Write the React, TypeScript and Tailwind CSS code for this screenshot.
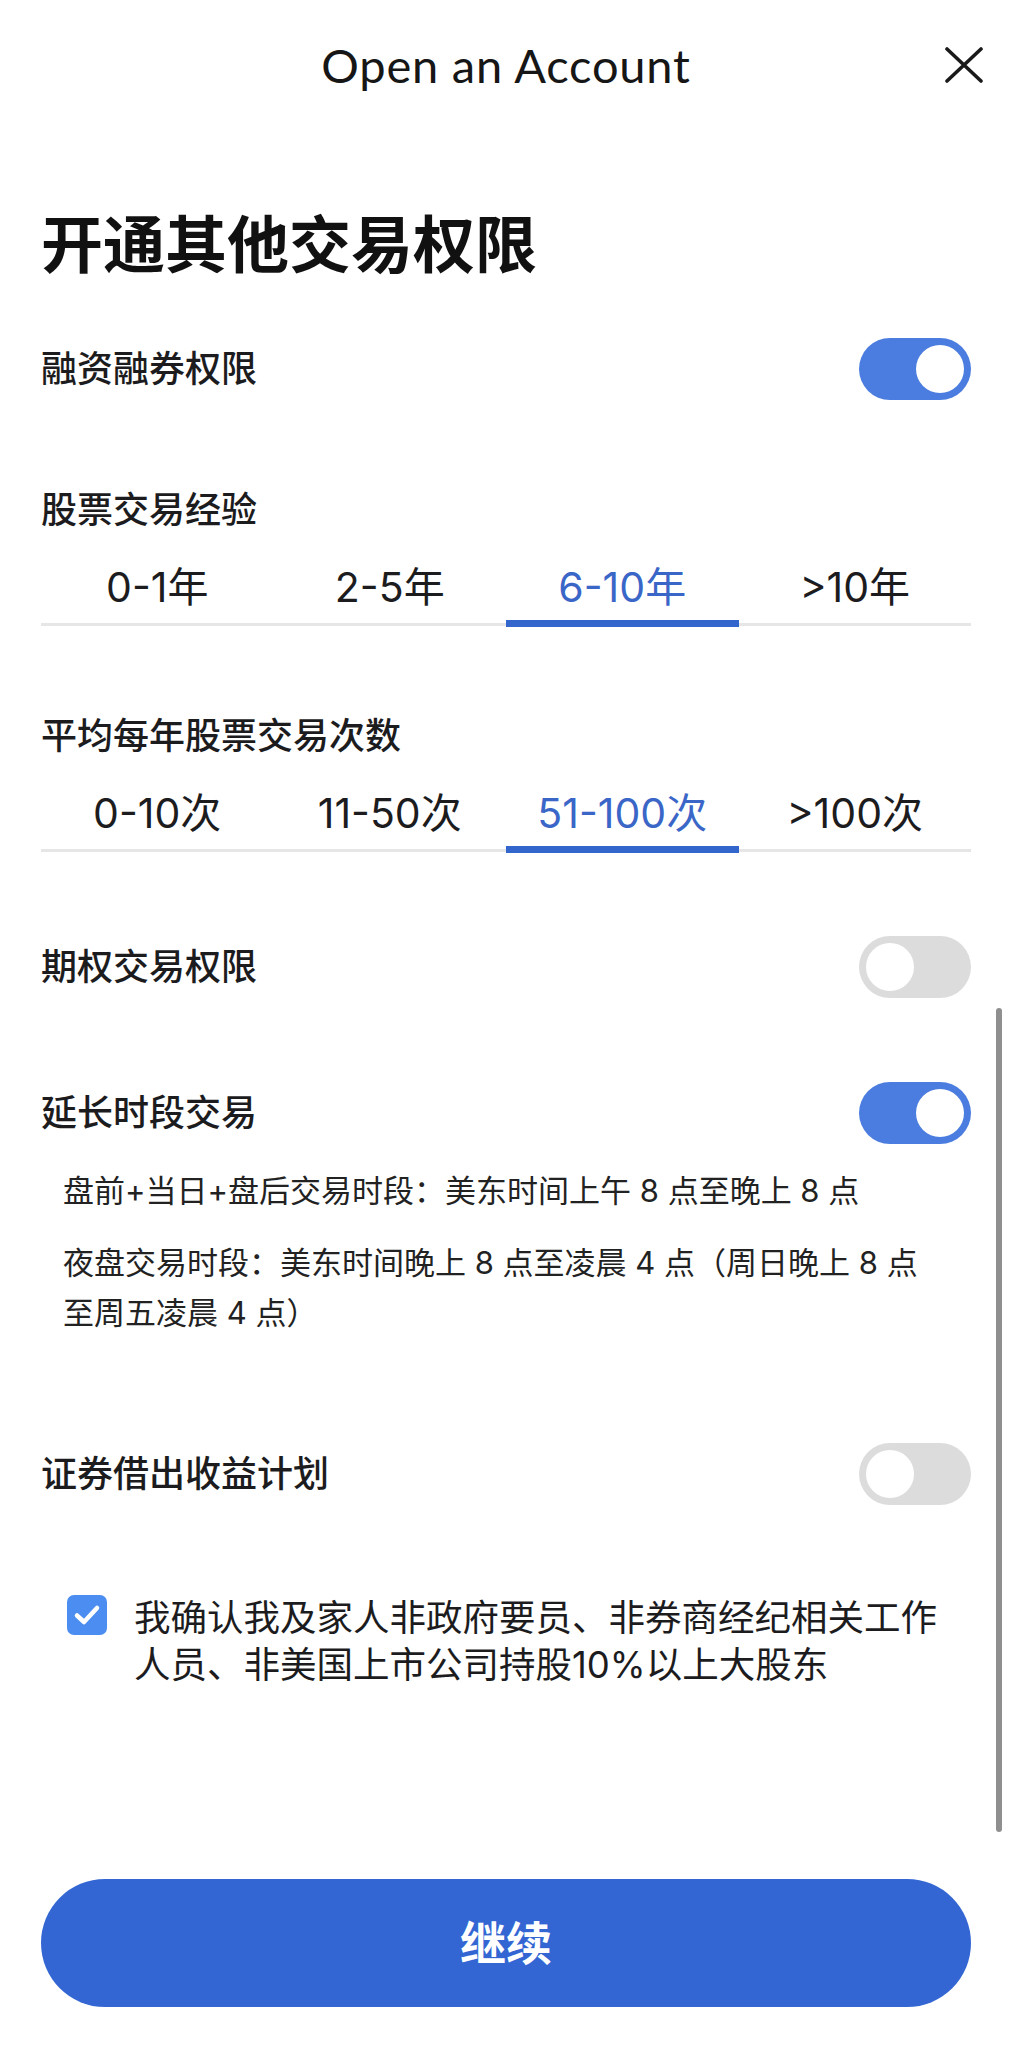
import React, { useState } from 'react';

function Toggle({ on, onClick }: { on: boolean; onClick: () => void }) {
  return (
    <button
      onClick={onClick}
      className={`flex h-[62px] w-[112px] shrink-0 items-center rounded-full p-[7px] ${
        on ? 'justify-end bg-[#4a7ddf]' : 'justify-start bg-[#dcdcdc]'
      }`}
    >
      <span className="block h-[48px] w-[48px] rounded-full bg-white" />
    </button>
  );
}

function ToggleRow({ label, on, onClick, className }: { label: string; on: boolean; onClick: () => void; className: string }) {
  return (
    <div className={`flex items-center justify-between ${className}`}>
      <span className="text-[36px] font-medium leading-[44px] text-[#1c1c1e]">{label}</span>
      <Toggle on={on} onClick={onClick} />
    </div>
  );
}

function Tabs({ items, active, onChange }: { items: string[]; active: number; onChange: (i: number) => void }) {
  return (
    <div className="mt-[31px] flex border-b-[3px] border-[#e6e6e6]">
      {items.map((item, i) => (
        <button
          key={item}
          onClick={() => onChange(i)}
          className={`-mb-[4px] flex-1 border-b-[7px] pb-[9px] text-center text-[41px] leading-[48px] ${
            i === active ? 'border-[#3366cc] text-[#3a66c8]' : 'border-transparent text-[#1c1c1e]'
          }`}
        >
          {item}
        </button>
      ))}
    </div>
  );
}

export default function App() {
  const [margin, setMargin] = useState(true);
  const [options, setOptions] = useState(false);
  const [extended, setExtended] = useState(true);
  const [lending, setLending] = useState(false);
  const [experience, setExperience] = useState(2);
  const [frequency, setFrequency] = useState(2);
  const [confirmed, setConfirmed] = useState(true);

  return (
    <div className="relative flex min-h-[2048px] flex-col bg-white pl-[41px] pr-[38px] font-['Inter','Noto_Sans_CJK_SC',sans-serif] text-[#1c1c1e]">
      {/* Header */}
      <div className="grid h-[130px] grid-cols-[1fr_auto_1fr] items-center">
        <div />
        <h1 className="font-['Lato','Noto_Sans_CJK_SC',sans-serif] text-[47px] font-normal leading-[56px] tracking-[0.8px] text-[#161616]">
          Open an Account
        </h1>
        <button className="-mr-[12px] justify-self-end">
          <svg width="38" height="36" viewBox="0 0 38 36" fill="none">
            <path d="M2 2L36 34M36 2L2 34" stroke="#1a1a1a" strokeWidth="3.6" strokeLinecap="round" />
          </svg>
        </button>
      </div>

      <h2 className="mt-[80px] text-[62px] font-bold leading-[72px] text-[#111111]">开通其他交易权限</h2>

      <ToggleRow label="融资融券权限" on={margin} onClick={() => setMargin(!margin)} className="mt-[56px]" />

      <div className="mt-[88px] text-[36px] font-medium leading-[44px]">股票交易经验</div>
      <Tabs items={['0-1年', '2-5年', '6-10年', '>10年']} active={experience} onChange={setExperience} />

      <div className="mt-[88px] text-[36px] font-medium leading-[44px]">平均每年股票交易次数</div>
      <Tabs items={['0-10次', '11-50次', '51-100次', '>100次']} active={frequency} onChange={setFrequency} />

      <ToggleRow label="期权交易权限" on={options} onClick={() => setOptions(!options)} className="mt-[84px]" />

      <ToggleRow label="延长时段交易" on={extended} onClick={() => setExtended(!extended)} className="mt-[84px]" />

      <div className="max-w-[895px] pl-[22px] text-[31px] leading-[50px] text-[#222222]">
        <p className="mt-[22px]">盘前+当日+盘后交易时段：美东时间上午 8 点至晚上 8 点</p>
        <p className="mt-[22px]">夜盘交易时段：美东时间晚上 8 点至凌晨 4 点（周日晚上 8 点至周五凌晨 4 点）</p>
      </div>

      <ToggleRow label="证券借出收益计划" on={lending} onClick={() => setLending(!lending)} className="mt-[105px]" />

      <div className="mt-[90px] flex items-start gap-[27px] pl-[26px]">
        <button
          onClick={() => setConfirmed(!confirmed)}
          className={`flex h-[40px] w-[40px] shrink-0 items-center justify-center rounded-[7px] ${
            confirmed ? 'bg-[#4b8df0]' : 'border-2 border-[#c4c4c4] bg-white'
          }`}
        >
          {confirmed && (
            <svg width="40" height="40" viewBox="0 0 40 40" fill="none">
              <path d="M10 20.5L17 27L30 13" stroke="white" strokeWidth="4.5" strokeLinecap="round" strokeLinejoin="round" />
            </svg>
          )}
        </button>
        <p className="max-w-[820px] text-[36.5px] leading-[47px] text-[#1c1c1e]">
          我确认我及家人非政府要员、非券商经纪相关工作人员、非美国上市公司持股10%以上大股东
        </p>
      </div>

      <button className="mb-[41px] mt-auto h-[128px] w-full rounded-full bg-[#3366d3] text-[46px] font-bold text-white">
        继续
      </button>

      {/* Scroll indicator */}
      <div className="absolute left-[996px] top-[1008px] h-[824px] w-[6px] rounded-full bg-[#8f8f8f]" />
    </div>
  );
}
